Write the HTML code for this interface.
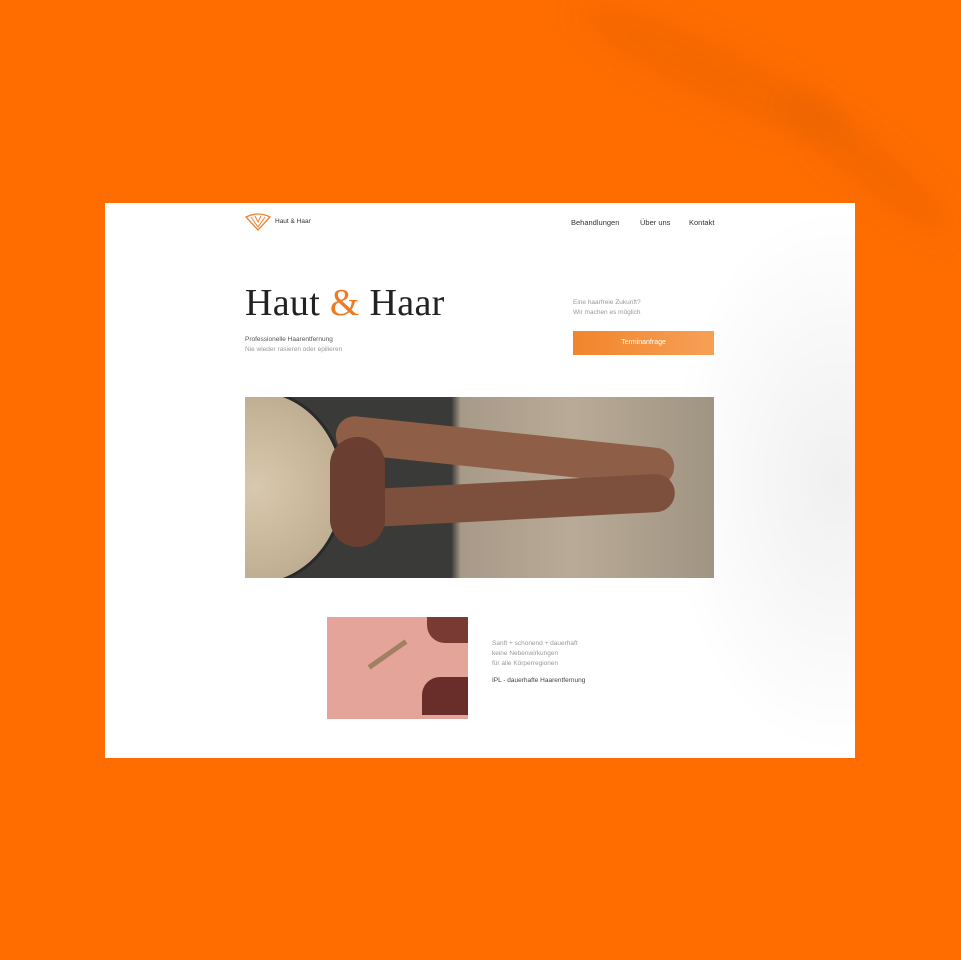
<!DOCTYPE html>
<html><head><meta charset="utf-8"><style>
*{margin:0;padding:0;box-sizing:border-box}
body{width:961px;height:960px;background:#ff6d00;position:relative;overflow:hidden;font-family:"Liberation Sans",sans-serif}
.shadow{position:absolute;background:rgba(150,60,0,0.10);border-radius:50%;filter:blur(16px)}
.card{position:absolute;left:105px;top:203px;width:750px;height:555px;background:#fff;overflow:hidden}
.t{position:absolute;white-space:nowrap}
.nav{font-size:7.5px;color:#333}
</style></head><body>
<div class="shadow" style="left:560px;top:40px;width:300px;height:60px;transform:rotate(25deg)"></div>
<div class="shadow" style="left:760px;top:140px;width:220px;height:50px;transform:rotate(40deg)"></div>
<div class="card">
<div style="position:absolute;left:560px;top:0;width:190px;height:555px;background:radial-gradient(ellipse at 90% 50%,rgba(0,0,0,0.06) 0%,rgba(0,0,0,0) 70%)"></div>
<svg style="position:absolute;left:140px;top:10px" width="26" height="18" viewBox="0 0 26 18"><path d="M1 4 Q13 -2 25 4 L13 17 Z" fill="none" stroke="#f08030" stroke-width="1.3"/><path d="M6 4 L13 14 L20 4 M10 3 L13 9 L16 3" fill="none" stroke="#f08030" stroke-width="1"/></svg>
<div class="t" style="left:170px;top:15px;font-size:6.5px;color:#333">Haut &amp; Haar</div>
<div class="t nav" style="left:466px;top:15px">Behandlungen</div>
<div class="t nav" style="left:535px;top:15px">Über uns</div>
<div class="t nav" style="left:584px;top:15px">Kontakt</div>
<div class="t" style="left:140px;top:78px;font-family:'Liberation Serif',serif;font-size:38px;color:#222;letter-spacing:0.3px">Haut <span style="color:#f07a20">&amp;</span> Haar</div>
<div class="t" style="left:140px;top:133px;font-size:6.5px;color:#555">Professionelle Haarentfernung</div>
<div class="t" style="left:140px;top:143px;font-size:6.5px;color:#999">Nie wieder rasieren oder epilieren</div>
<div class="t" style="left:468px;top:96px;font-size:6.5px;color:#999">Eine haarfreie Zukunft?</div>
<div class="t" style="left:468px;top:106px;font-size:6.5px;color:#999">Wir machen es möglich</div>
<div style="position:absolute;left:468px;top:128px;width:141px;height:24px;background:linear-gradient(90deg,#f2852c,#f6a055);color:#fff;font-size:7px;text-align:center;line-height:24px">Terminanfrage</div>
<div style="position:absolute;left:140px;top:194px;width:469px;height:181px;overflow:hidden;background:linear-gradient(90deg,#3a3a38 0,#3a3a38 44%,#a89a88 46%,#b8aa96 70%,#a09482 100%)">
<div style="position:absolute;left:-80px;top:-8px;width:180px;height:197px;border-radius:50%;background:radial-gradient(circle,#d8c8ae 0,#c4b396 60%,#b0a088 100%);border:3px solid #2a2a2a"></div>
<div style="position:absolute;left:90px;top:35px;width:340px;height:38px;border-radius:25px;background:#8e5e46;transform:rotate(6deg)"></div>
<div style="position:absolute;left:90px;top:85px;width:340px;height:38px;border-radius:25px;background:#7c503c;transform:rotate(-3deg)"></div>
<div style="position:absolute;left:85px;top:40px;width:55px;height:110px;border-radius:30px;background:#6a3e30"></div>
</div>
<div style="position:absolute;left:222px;top:414px;width:141px;height:102px;background:#e4a49a;overflow:hidden">
<div style="position:absolute;left:100px;top:0;width:41px;height:26px;background:#7a3a34;border-radius:0 0 0 18px"></div>
<div style="position:absolute;left:95px;top:60px;width:46px;height:38px;background:#6a2e2a;border-radius:18px 0 0 0"></div>
<div style="position:absolute;left:58px;top:15px;width:5px;height:45px;background:#a08060;transform:rotate(55deg)"></div>
</div>
<div class="t" style="left:387px;top:437px;font-size:6.5px;color:#999">Sanft + schonend + dauerhaft</div>
<div class="t" style="left:387px;top:447px;font-size:6.5px;color:#999">keine Nebenwirkungen</div>
<div class="t" style="left:387px;top:457px;font-size:6.5px;color:#999">für alle Körperregionen</div>
<div class="t" style="left:387px;top:474px;font-size:6.5px;color:#444">IPL - dauerhafte Haarentfernung</div>
</div>
</body></html>
